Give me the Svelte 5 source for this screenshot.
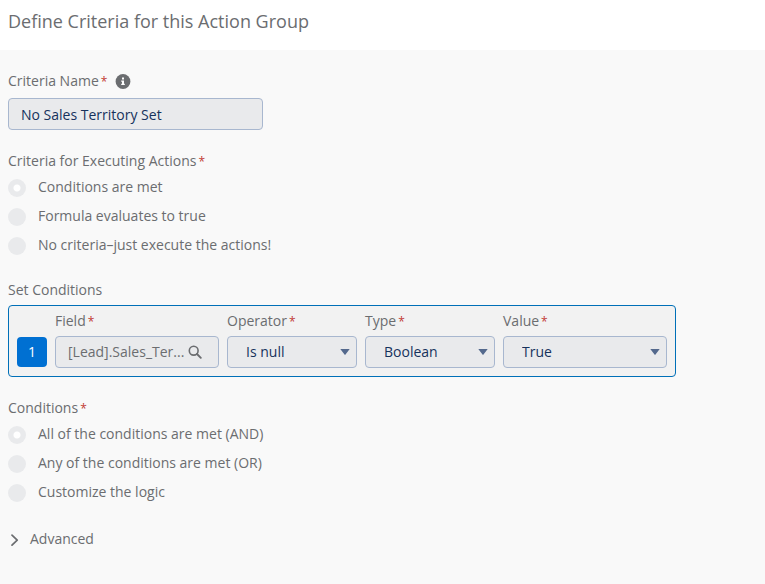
<script>
  let criteriaName = $state('No Sales Territory Set');
  let field = $state('[Lead].Sales_Ter...');
  let executing = $state('met');
  let logic = $state('and');

  const executingOptions = [
    { value: 'met', label: 'Conditions are met' },
    { value: 'formula', label: 'Formula evaluates to true' },
    { value: 'none', label: 'No criteria–just execute the actions!' }
  ];
  const logicOptions = [
    { value: 'and', label: 'All of the conditions are met (AND)' },
    { value: 'or', label: 'Any of the conditions are met (OR)' },
    { value: 'custom', label: 'Customize the logic' }
  ];
  const selects = [
    { id: 'operator', label: 'Operator', value: 'Is null' },
    { id: 'type', label: 'Type', value: 'Boolean' },
    { id: 'value', label: 'Value', value: 'True' }
  ];
</script>

{#snippet required()}<span class="required">*</span>{/snippet}

<div class="panel">
  <header>
    <h1>Define Criteria for this Action Group</h1>
  </header>

  <main>
    <div class="name">
      <div class="label-row">
        <label for="criteria-name">Criteria Name{@render required()}</label>
        <button class="info" type="button" aria-label="Help">
          <svg viewBox="0 0 16 16" width="16" height="16" aria-hidden="true">
            <circle cx="8" cy="8.5" r="7.4" fill="#6b6d70" />
            <path d="M7 4.6h2v2H7zM6.2 7.5H9v3.3h.8v1.2H6.2v-1.2H7V8.7h-.8z" fill="#fff" />
          </svg>
        </button>
      </div>
      <input id="criteria-name" class="control" type="text" bind:value={criteriaName} disabled />
    </div>

    <fieldset>
      <legend>Criteria for Executing Actions{@render required()}</legend>
      <div class="choices">
        {#each executingOptions as option}
          <label class="choice">
            <input type="radio" name="executing" value={option.value} bind:group={executing} disabled />
            <span>{option.label}</span>
          </label>
        {/each}
      </div>
    </fieldset>

    <section>
      <h2>Set Conditions</h2>
      <div class="condition">
        <button class="number" type="button">1</button>
        <div class="cell">
          <label for="field">Field{@render required()}</label>
          <div class="control lookup">
            <input id="field" type="text" bind:value={field} disabled />
            <svg viewBox="0 0 14 14" width="14" height="14" aria-hidden="true">
              <circle cx="5.7" cy="5.7" r="4.4" fill="none" stroke="#6b6d70" stroke-width="1.6" />
              <path d="M9 9l3.8 3.8" stroke="#6b6d70" stroke-width="1.9" stroke-linecap="round" />
            </svg>
          </div>
        </div>
        {#each selects as item}
          <div class="cell">
            <label for={item.id}>{item.label}{@render required()}</label>
            <div class="select">
              <select id={item.id} class="control" disabled>
                <option>{item.value}</option>
              </select>
              <svg viewBox="0 0 10 6" width="10" height="6" aria-hidden="true">
                <path d="M.3 0h9.4L5.5 5.6a.6.6 0 0 1-1 0z" fill="#54698d" />
              </svg>
            </div>
          </div>
        {/each}
      </div>
    </section>

    <fieldset>
      <legend>Conditions{@render required()}</legend>
      <div class="choices">
        {#each logicOptions as option}
          <label class="choice">
            <input type="radio" name="logic" value={option.value} bind:group={logic} disabled />
            <span>{option.label}</span>
          </label>
        {/each}
      </div>
    </fieldset>

    <button class="advanced" type="button" aria-expanded="false">
      <svg viewBox="0 0 14 14" width="14" height="14" aria-hidden="true">
        <path d="M4 3.2l5.2 5-5.2 5" fill="none" stroke="#6b6d70" stroke-width="1.7" stroke-linecap="round" stroke-linejoin="round" />
      </svg>
      Advanced
    </button>
  </main>
</div>

<style>
  :global(body) {
    background: #f9f9f9;
  }
  .panel,
  .panel button,
  .panel input,
  .panel select {
    box-sizing: border-box;
    font-family: 'Open Sans', 'Noto Sans', sans-serif;
    font-size: 14px;
    line-height: 20px;
    color: #6b6d70;
  }
  header {
    padding: 9px 8px 17px;
    background: #fff;
  }
  h1 {
    margin: 0;
    font-size: 18px;
    line-height: 24px;
    font-weight: 400;
  }
  h2 {
    margin: 0 0 5px;
    font-size: 14px;
    line-height: 20px;
    font-weight: 400;
  }
  main {
    display: flex;
    flex-direction: column;
    gap: 21px;
    padding: 21px 8px;
  }
  button {
    border: 0;
    padding: 0;
    background: none;
  }
  .required {
    margin-left: 2px;
    font-size: 12px;
    line-height: 12px;
    color: #c23934;
  }
  .label-row {
    display: flex;
    align-items: center;
    gap: 8px;
    margin-bottom: 7px;
  }
  .info {
    display: flex;
  }
  .panel .control {
    box-sizing: border-box;
    display: block;
    width: 100%;
    height: 32px;
    margin: 0;
    padding: 0 12px;
    border: 1px solid #a8b7cf;
    border-radius: 4px;
    background: #e9eaec;
    color: #16325c;
    opacity: 1;
  }
  .name .control {
    max-width: 255px;
  }
  fieldset {
    min-width: 0;
    margin: 0;
    padding: 0;
    border: 0;
  }
  legend {
    padding: 0;
    margin-bottom: 4px;
  }
  .choices {
    display: flex;
    flex-direction: column;
    gap: 3px;
  }
  .choice {
    display: flex;
    align-items: center;
    gap: 12px;
    height: 26px;
  }
  .choice span {
    padding-bottom: 2px;
  }
  .choice input {
    appearance: none;
    width: 18px;
    height: 18px;
    margin: 0;
    border-radius: 50%;
    background: #e9eaec;
  }
  .choice input:checked {
    background: radial-gradient(circle, #fff 3px, #e9eaec 4px);
  }
  .condition {
    box-sizing: border-box;
    display: grid;
    grid-template-columns: 30px 164fr 130fr 130fr 164fr;
    align-items: end;
    gap: 8px;
    max-width: 668px;
    padding: 5px 8px 8px;
    border: 1px solid #0070b8;
    border-radius: 4px;
    background: #f2f2f2;
  }
  .panel .number {
    height: 30px;
    margin-bottom: 1px;
    border-radius: 4px;
    background: #0070d2;
    color: #fff;
  }
  .cell {
    min-width: 0;
  }
  .cell label {
    display: block;
    margin-bottom: 5px;
  }
  .panel .lookup {
    display: flex;
    align-items: center;
    gap: 2px;
    padding-right: 16px;
  }
  .lookup input {
    flex: 1;
    min-width: 0;
    padding: 0;
    border: 0;
    background: none;
  }
  .select {
    display: grid;
    align-items: center;
  }
  .select select,
  .select svg {
    grid-area: 1 / 1;
  }
  .select svg {
    justify-self: end;
    margin-right: 7px;
    pointer-events: none;
  }
  .panel select.control {
    appearance: none;
    padding: 0 20px 0 18px;
  }
  .advanced {
    display: flex;
    align-items: center;
    align-self: flex-start;
    gap: 8px;
    margin-top: 2px;
  }
</style>
